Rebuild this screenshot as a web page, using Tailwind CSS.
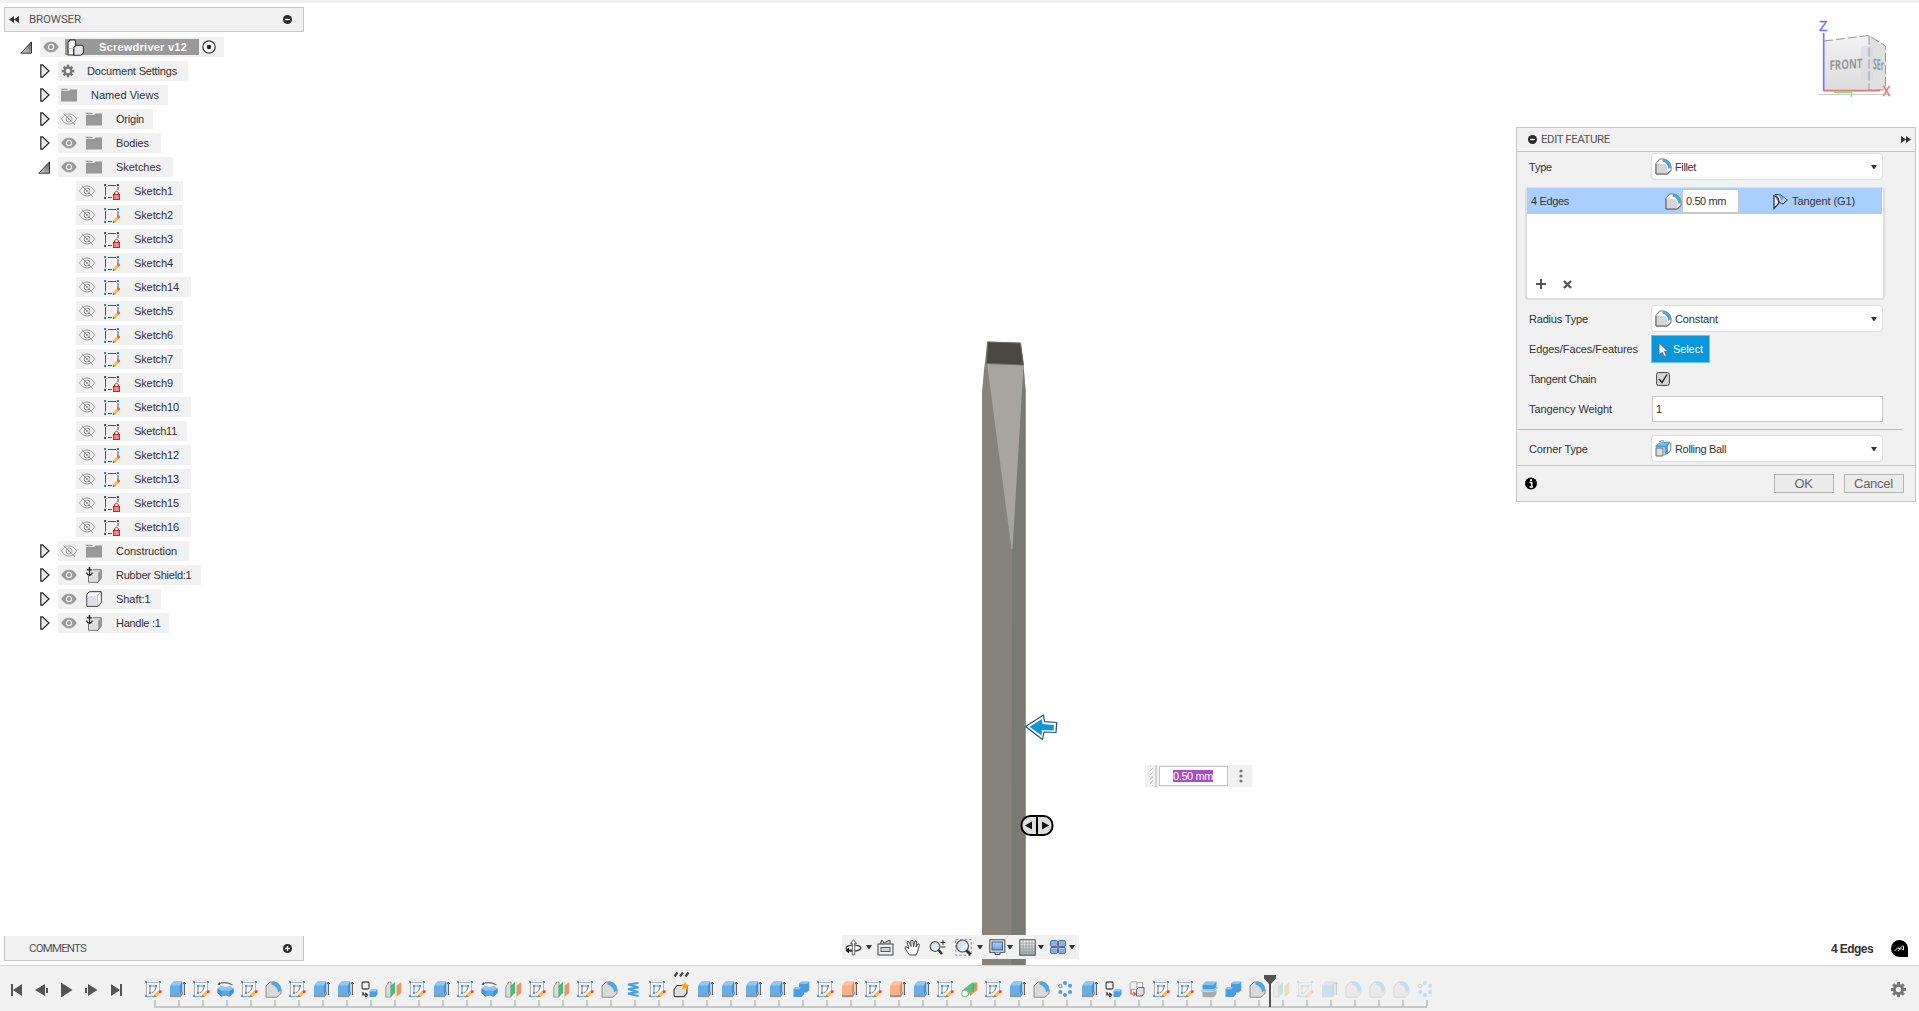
<!DOCTYPE html>
<html lang="en">
<head>
<meta charset="utf-8">
<title>Screwdriver v12</title>
<script src="https://cdn.jsdelivr.net/npm/@tailwindcss/browser@4"></script>
</head>
<body class="w-[1919px] h-[1011px] overflow-hidden bg-white font-['Liberation_Sans',Arial,sans-serif] text-[11px] leading-[14px] text-[#333]">

<svg class="absolute" width="0" height="0">
  <defs>
    <linearGradient id="gTri" x1="0" y1="1" x2="1" y2="0"><stop offset="0" stop-color="#ddd"/><stop offset="1" stop-color="#555"/></linearGradient>
    <linearGradient id="gBlue" x1="0" y1="0" x2="0" y2="1"><stop offset="0" stop-color="#b5d2f2"/><stop offset="1" stop-color="#6ba0de"/></linearGradient>
    <linearGradient id="gLens" x1="0" y1="0" x2="1" y2="1"><stop offset="0" stop-color="#b9dbe0"/><stop offset="1" stop-color="#fff"/></linearGradient>
    <linearGradient id="gGrid" x1="0" y1="0" x2="0" y2="1"><stop offset="0" stop-color="#fff"/><stop offset="1" stop-color="#9aa"/></linearGradient>
    <linearGradient id="gCube" x1="0" y1="0" x2="0" y2="1"><stop offset="0" stop-color="#f3f3f4"/><stop offset="1" stop-color="#dcdcde"/></linearGradient>
  </defs>
  <symbol id="open" viewBox="0 0 12 13"><path d="M11.5 .8V12.2H.8Z" fill="url(#gTri)" stroke="#333"/></symbol>
  <symbol id="closed" viewBox="0 0 10 14"><path d="M.8 .8H2.5L9 7L2.5 13.2H.8Z" fill="#e9eaec" stroke="#222" stroke-width="1.2"/></symbol>
  <symbol id="eye" viewBox="0 0 16 12"><path d="M.3 6C3 1.600 5.500.8 8 .8S13 1.600 15.700 6C13 10.400 10.500 11.200 8 11.200S3 10.400.3 6Z" fill="#999"/><circle cx="8" cy="6" r="2.600" fill="#999" stroke="#f1f1f1" stroke-width="1.200"/></symbol>
  <symbol id="eyeoff" viewBox="0 0 16 12"><path d="M.5 6C3 2 5.500 1 8 1s5 1 7.500 5C13 10 10.500 11 8 11S3 10 .5 6Z" fill="none" stroke="#9a9a9a"/><circle cx="8" cy="6" r="3" fill="none" stroke="#9a9a9a"/><circle cx="8" cy="6" r="1" fill="#9a9a9a"/><path d="M2.500.3L14 11.700" stroke="#8a8a8a" stroke-width="1"/><path d="M3.500.1L15 11.500" stroke="#f1f1f1" stroke-width=".7"/></symbol>
  <symbol id="folder" viewBox="0 0 16 14"><path d="M0 .8H6L7.500 2.300H0ZM0 3H8L9.500 1.500H16V13.500H0Z" fill="#999"/></symbol>
  <symbol id="gear" viewBox="0 0 16 16"><g fill="#777"><circle cx="8" cy="8" r="5.200"/><rect x="6.600" y=".8" width="2.800" height="14.400"/><rect x=".8" y="6.600" width="14.400" height="2.800"/><g transform="rotate(45 8 8)"><rect x="6.600" y="1" width="2.800" height="14"/><rect x="1" y="6.600" width="14" height="2.800"/></g></g><circle cx="8" cy="8" r="2.500" fill="#f1f1f1"/></symbol>
  <symbol id="sk" viewBox="0 0 16 17"><path d="M4 2.500H12M1.500 4V12.500M14 4V9M4 14.500H8" stroke="#555" fill="none"/><path d="M0 1h2v2H0zM13 1h2v2h-2zM0 14h2v2H0z" fill="#1e88e5"/><path d="M9.500 13.200L13.200 9.500L15.200 11.500L11.300 15.200Z" fill="#fbbc45"/><path d="M9.500 13.200L11.300 15.200L8.500 16.200Z" fill="#777"/><circle cx="14.500" cy="10" r="1.400" fill="#f4455a"/></symbol>
  <symbol id="lock" viewBox="0 0 16 17"><path d="M4 2.500H12M1.500 4V12.500M14 4V7M4 14.500H8" stroke="#555" fill="none"/><path d="M0 1h2v2H0zM13 1h2v2h-2zM0 14h2v2H0z" fill="#555"/><path d="M10.500 11V9.500Q12.500 7 14.500 9.500V11" fill="none" stroke="#c33"/><rect x="9.500" y="11.500" width="6" height="5" fill="#e58a8a" stroke="#c62828"/></symbol>
  <symbol id="asm" viewBox="0 0 16 16"><path d="M1 3L3 .8H7L8 2V8L6.500 9V15H1Z" fill="#f5f5f7" stroke="#333"/><path d="M6.500 8L8.500 5.800H14L15.400 7V13L13 15.300H6.500Z" fill="#e6e7ec" stroke="#333"/><path d="M1 9H6.500" stroke="#aaa" stroke-width=".7"/></symbol>
  <symbol id="box" viewBox="0 0 16 16"><path d="M.8 4.500Q.8 3 2 2L3 1Q3.500.7 5 .7H15.300V11Q15.300 12 14 13.200L12.500 15Q12 15.300 11 15.300H.8Z" fill="#fff" stroke="#333"/><path d="M2 5H10.500V14H2Z" fill="#dcdfe4"/><path d="M11.500 4.500L15 1.200V11.500L11.500 14.800Z" fill="#fff" stroke="#777" stroke-width=".5"/></symbol>
  <symbol id="anch" viewBox="0 0 16 16"><path d="M7 2.700H15.300V11L12 15.300H2.500V9" fill="#dedede" stroke="#777"/><path d="M12 5.500L15.300 3V11L12 15Z" fill="#999"/><path d="M3.500 1V8M1 2.800H6.200M.7 5.500Q1 8 3.500 8.300Q6 8 6.300 5.500" fill="none" stroke="#222" stroke-width="1.200"/><circle cx="3.500" cy="1" r="1" fill="#222"/></symbol>

  <symbol id="t-sk" viewBox="0 0 17 17"><path d="M1.500 1.500H14.500V9M1.500 1.500V15.500H9" fill="none" stroke="#b5b5b5"/><path d="M2 2H14V9L9 15H2Z" fill="#f4f4f4"/><path d="M2 15.500H9" stroke="#aaa" stroke-width="1.500"/><path d="M5 5H11M5 5V12M11 5Q11 10 6.500 12" fill="none" stroke="#888"/><path d="M0 0h2v2H0zM14 0h2v2h-2zM0 14h2v2H0zM4 4h2v2H4zM10 4h2v2h-2zM4 11h2v2H4z" fill="#3a9bee"/><path d="M9.500 13.500L13.500 9.500L16 12L11.800 15.800Z" fill="#fbbc45"/><path d="M9.500 13.500L11.800 15.800L8 16.600Z" fill="#888"/><circle cx="15.200" cy="10.400" r="1.500" fill="#f43b50"/></symbol>
  <symbol id="t-ex" viewBox="0 0 17 17"><path d="M1 13.500H11L14 10.500V13L11.500 16.300H1Z" fill="#999"/><path d="M1 4.500L4.500.5H13.200V10.500L11 14H1Z" fill="#67aee6"/><path d="M1 4.500L4.500.5H13.200L11 4.500Z" fill="#8bc9f6"/><path d="M11 4.500L13.200.5V10.500L11 14Z" fill="#3d8ccc"/><path d="M15.300 14V2M13.800 3L15.300 1L16.800 3" fill="none" stroke="#444"/></symbol>
  <symbol id="t-or" viewBox="0 0 17 17"><path d="M1 13.500H11L14 10.500V13L11.500 16.300H1Z" fill="#999"/><path d="M1 4.500L4.500.5H13.200V10.500L11 14H1Z" fill="#fbb083"/><path d="M1 4.500L4.500.5H13.200L11 4.500Z" fill="#fdc49f"/><path d="M11 4.500L13.200.5V10.500L11 14Z" fill="#e28a5a"/><path d="M15.300 14V2M13.800 3L15.300 1L16.800 3" fill="none" stroke="#444"/></symbol>
  <symbol id="t-rv" viewBox="0 0 17 17"><path d="M1.500 3Q8.500 0 15.500 4" fill="none" stroke="#666" stroke-width="1.200"/><path d="M.3 3.500L3 1V4.300Z" fill="#555"/><path d="M.5 7.500L4 5Q8.500 7 13 5L16.500 7.500V12L12.500 15.800Q8.500 13.500 4.500 15.800L.5 12Z" fill="#58a6e0"/><path d="M.5 7.500L4 5Q8.500 7 13 5L16.500 7.500L12.500 10Q8.500 8.500 4.500 10Z" fill="#8bc7f3"/><path d="M.5 7.500L4.500 10V15.800L.5 12ZM16.500 7.500L12.500 10V15.800L16.500 12Z" fill="#4492d0"/></symbol>
  <symbol id="t-fi" viewBox="0 0 17 17"><path d="M1 5L5 1H9Q15 3 16 9V12.500L12 16.200H1Z" fill="#d9d9d9" stroke="#8a8a8a"/><path d="M6.500 .6H10Q15.500 2 16.500 9L13 11.500Q12.500 5.500 6.500 3.500Z" fill="#58a6e0"/></symbol>
  <symbol id="t-cp" viewBox="0 0 17 17"><rect x="1" y="1" width="7" height="7" rx="1.500" fill="#eee" stroke="#555" stroke-width="1.300"/><path d="M2 11V14H5M4.300 12L6.500 14L4.300 16" fill="none" stroke="#222" stroke-width="1.200"/><path d="M8.500 10.500L10.500 8.500H16.500V13.500L14.500 16H8.500Z" fill="#4d9fde"/><path d="M8.500 10.500L10.500 8.500H16.500L14.500 10.500Z" fill="#93cbf5"/></symbol>
  <symbol id="t-pl" viewBox="0 0 17 17"><path d="M.8 6L3.800 1H6V16H.8Z" fill="#ddd" stroke="#999"/><path d="M5.500 5L10 1V12L5.500 16Z" fill="#4dbd75"/><path d="M11.500 4.500L16.300 1V12L11.500 16Z" fill="#e59a6b"/></symbol>
  <symbol id="t-co" viewBox="0 0 17 17"><path d="M13.500 2L3 3.500L13.500 6.500L3 8L13.500 11L3 12.500L13.500 15" fill="none" stroke="#4a9fe0" stroke-width="2"/></symbol>
  <symbol id="t-nb" viewBox="0 0 17 17"><path d="M1 8.500L4 4.500H14V12L11 15.700H2.500Q1 15.700 1 14Z" fill="#ddd" stroke="#444" stroke-width="1.200"/><path d="M12 .3L13 3.500L16.500 4L14 6L14.500 9L12 7L9 8.500L10 5.500L7.800 3.700L11 3.300Z" fill="#ffa000"/></symbol>
  <symbol id="t-cb" viewBox="0 0 17 17"><path d="M6 2.500L8 .8H16.300V9L14 11.500H11V13.500L8.500 16H.5V8L2.500 6H6Z" fill="#4a9ddd"/><path d="M6 2.500L8 .8H16.300L14 3H6ZM.5 8L2.500 6H8L6 8.500H.5Z" fill="#83c2f1"/></symbol>
  <symbol id="t-sg" viewBox="0 0 17 17"><path d="M8 6L12 1.500H16.500V9L9 15V10Z" fill="#e39a68"/><path d="M1 9.500L11 1.500L15 3L15 6L6.500 15Z" fill="#5cc17e"/><path d="M12.500 3.500L12 11" stroke="#a8783f"/><circle cx="4" cy="12.500" r="3.400" fill="#fff" stroke="#66bd83"/></symbol>
  <symbol id="t-pt" viewBox="0 0 17 17"><g fill="#4a9fe0"><circle cx="8" cy="2" r="2"/><circle cx="13" cy="4.800" r="2"/><circle cx="13" cy="11" r="2"/><circle cx="8" cy="14" r="2"/><circle cx="3.300" cy="11" r="2"/></g><circle cx="3.300" cy="5" r="1.700" fill="#eee" stroke="#888"/></symbol>
  <symbol id="t-cc" viewBox="0 0 17 17"><path d="M1 2.500L3 .8H8V7L6.500 8.500H1ZM7 3L8.500 1.500H13.500V6" fill="#eee" stroke="#aaa"/><path d="M2 9V13H6M4.500 11L6.500 13L4.500 15" fill="none" stroke="#d9534f" stroke-width="1.200"/><path d="M7.500 8.500L9.500 6.500H15V12.500L13 15H7.500Z" fill="#dcdce2" stroke="#666"/></symbol>
  <symbol id="t-sp" viewBox="0 0 17 17"><path d="M1.500 11H12L15.500 9V13L12.500 16.300H1.500Z" fill="#aaa"/><path d="M1.500 4L4.500.8H15.500V6L12.500 8.500H1.500Z" fill="#4a9ddd"/><path d="M1.500 4L4.500.8H15.500L12.500 4Z" fill="#83c2f1"/><path d="M0 9.800H12.500L16.500 6.500" fill="none" stroke="#7fbdf0" stroke-width="1.300"/></symbol>
  <symbol id="t-rb" viewBox="0 0 17 17"><path d="M1 8H8V16H1Z" fill="#ddd" stroke="#666"/><path d="M4 2Q7 0 9 1M15.800 3V9Q15.500 12 12 14" fill="none" stroke="#777"/><path d="M.5 5.500L5 2.500L14 1.500L15.500 3L13 5V13L9.500 16V7.500H.5Z" fill="#4f9fda"/><path d="M1.500 5L5 3H13L10 5.800Z" fill="#79bcec"/></symbol>
  <symbol id="fil" viewBox="0 0 17 17"><path d="M1 5.500L4.500 1H9Q15 2 16 9V12L12.500 16H1Z" fill="#fff" stroke="#777"/><path d="M1.500 5.500H7Q12 6 12.500 11.500V15.500H1.500Z" fill="#d6d6d6"/><path d="M8 .7Q15.500 1.500 16.500 9L13.500 11Q13 5 7.500 3.500Z" fill="#58a3da"/><path d="M1 5.500V16H12.500L16 12.500" fill="none" stroke="#666"/></symbol>
  <symbol id="caret" viewBox="0 0 6 4"><path d="M0 0H6L3.500 4H2.500Z" fill="#333"/></symbol>
</svg>

<div class="flex flex-col h-full">
  <main class="relative h-[965px] flex flex-col border-t-[3px] border-[#f0f0f0]">
    <!-- model -->
    <svg class="absolute left-[980px] top-[335px]" width="60" height="627" viewBox="980 338 60 627">
      <path d="M987.500 341.500L984 370L982 392V965H1026V395L1023.500 365L1020.500 343Z" fill="#86837a"/>
      <path d="M1012 549L1023.500 365L1025.500 392L1026 965H1011.500Z" fill="#797a71"/>
      <path d="M1025.500 392V965" stroke="#94978f"/>
      <path d="M987 363L1023.500 365L1012.500 549H1011.500Z" fill="#a8a59e"/>
      <path d="M987.500 342L1020.500 343L1023.500 365L986.500 363.500Z" fill="#4a4840" stroke="#706d65"/>
    </svg>
    <!-- manipulators -->
    <svg class="absolute left-[1018px] top-[707px]" width="42" height="130" viewBox="1018 710 42 130">
      <path d="M1025.500 726.500L1043.500 715L1044.500 721.700L1056.700 722.500L1056 732.500L1044 732L1042.500 739.500Z" fill="#fff" stroke="#24507e" stroke-width="1.200" stroke-linejoin="round"/>
      <path d="M1029.500 726.700L1042 719L1042.500 724L1054 725L1053.500 730.500L1042 730L1041.500 735.500Z" fill="#0b97d8"/>
      <rect x="1021.500" y="816" width="31" height="19" rx="9" fill="#dedede" stroke="#000" stroke-width="2"/>
      <path d="M1037 816V835" stroke="#000" stroke-width="2"/><path d="M1025 825.500L1032 821.500V829.500ZM1049 825.500L1042 821.500V829.500Z" fill="#111"/>
    </svg>
    <div class="absolute left-[1145px] top-[762px] w-[107px] h-[22px] bg-[#f1f1f1] flex items-center">
      <div class="ml-[5px] w-[3px] h-5 bg-[repeating-linear-gradient(135deg,#ccc_0_1px,#f4f4f4_1px_3px)]"></div>
      <div class="ml-0.5 w-0.5 h-[22px] bg-[#d5d5d5]"></div>
      <div class="ml-0.5 w-[69px] h-5 border border-[#c4c4c4] bg-white flex items-center justify-center pr-px"><span data-w="40" class="bg-[#a94cc0] text-white text-[11px] leading-[12px]">0.50 mm</span></div>
      <svg class="ml-[11px]" width="4" height="14"><g fill="#777"><circle cx="2" cy="2" r="1.600"/><circle cx="2" cy="7" r="1.600"/><circle cx="2" cy="12" r="1.600"/></g></svg>
    </div>

    <div class="flex justify-between h-[933px]">
      <section class="ml-1 pt-1">
        <header class="w-[300px] h-[25px] border border-[#c8c8c8] bg-[#f1f1f1] flex items-center pl-1 pr-[11px]">
          <svg width="10" height="7"><path d="M5 0V7L0 3.500ZM10 0V7L5 3.500Z" fill="#333"/></svg>
          <span data-w="52" class="ml-2.5 mb-px font-[Roboto] text-[11.5px] text-[#555]">BROWSER</span>
          <svg class="ml-auto" width="9" height="9"><circle cx="4.500" cy="4.500" r="4.500" fill="#2b2b2b"/><path d="M2 4.500H7" stroke="#fff" stroke-width="1.300"/></svg>
        </header>
        <div id="tree" class="pt-[3px]"></div>
      </section>

      <section class="mr-[3px] flex flex-col">
        <svg class="ml-[290px]" width="100" height="124" viewBox="1806 3 100 124">
          <path d="M1818 94.500H1890" stroke="#ccc" />
          <path d="M1824 41L1869 35.500V90H1824Z" fill="url(#gCube)"/><path d="M1869 35.500L1885.500 46V90H1869Z" fill="#e0e0e3"/>
          <path d="M1861 46H1873V80H1861Z" fill="#d6d9e0" opacity=".6"/>
          <path d="M1824 41L1869 35.500L1885.500 46V90M1869 35.500V90H1886" fill="none" stroke="#999" stroke-dasharray="9 3"/>
          <text x="0" y="0" transform="matrix(1 -.06 0 1.250 1829.500 70)" font-family="Open Sans" font-weight="700" font-size="10.500" textLength="33" lengthAdjust="spacingAndGlyphs" fill="#94979c">FRONT</text>
          <text x="0" y="0" transform="matrix(1 .15 0 1.500 1873 69)" font-family="Open Sans" font-weight="700" font-size="10" textLength="11" lengthAdjust="spacingAndGlyphs" fill="#94979c">SEr</text>
          <path d="M1823.700 33V91" stroke="#7878ee" stroke-width="1.700"/><path d="M1823 90.700H1880" stroke="#ee7070" stroke-width="1.700"/><path d="M1834 92.300H1852M1851.500 92V97" stroke="#7be07b" stroke-width="1.500"/>
          <text x="1819" y="31" font-family="Liberation Sans" font-size="14" fill="#7474ee" stroke="#7474ee" stroke-width=".4" textLength="8.500" lengthAdjust="spacingAndGlyphs">Z</text>
          <text x="1882.500" y="95.500" font-family="Liberation Sans" font-size="14" fill="#f06a6a" stroke="#f06a6a" stroke-width=".4" textLength="8" lengthAdjust="spacingAndGlyphs">X</text>
        </svg>

        <div class="w-[400px] h-[375px] border border-[#c6c6c6] bg-[#f1f1f1]">
          <header class="h-6 border-b border-[#c6c6c6] flex items-center pl-[11px] pr-1">
            <svg width="9" height="9"><circle cx="4.500" cy="4.500" r="4.500" fill="#2b2b2b"/><path d="M2 4.500H7" stroke="#fff" stroke-width="1.300"/></svg>
            <span data-w="69" class="ml-1 mb-px font-[Roboto] text-[11.5px] text-[#555]">EDIT FEATURE</span>
            <svg class="ml-auto" width="10" height="7"><path d="M0 0V7L5 3.500ZM5 0V7L10 3.500Z" fill="#333"/></svg>
          </header>
          <div class="h-[29px] flex items-center pl-3"><span class="w-[122px]"><span data-w="23">Type</span></span>
            <div class="w-[232px] h-[27px] border border-[#dcdcdc] rounded-sm bg-white flex items-center px-[3px] pr-[5px]"><svg width="17" height="17"><use href="#fil"/></svg><span data-w="21" class="ml-[3px]">Fillet</span><svg class="ml-auto" width="6" height="4"><use href="#caret"/></svg></div></div>
          <div class="mt-1.5 ml-2 w-[360px] h-[113px] border-2 border-[#dedede] rounded-sm bg-white flex flex-col">
            <div class="-mt-px h-[26px] mr-px bg-[#a9cfff] flex items-center pl-1"><span class="w-[134px]"><span data-w="38">4 Edges</span></span>
              <svg width="17" height="17"><use href="#fil"/></svg>
              <div class="w-[57px] h-6 border border-[#c8c8c8] bg-white flex items-center pl-[3px]"><span data-w="40">0.50 mm</span></div>
              <svg class="ml-[33px]" width="17" height="17" viewBox="0 0 17 17"><path d="M2 3V15.500L7 10" fill="#f0f4f8" stroke="#26303c" stroke-width="1.200"/><path d="M1 2.500Q5 2.500 7 10" fill="none" stroke="#26303c"/><path d="M3 1.500H8L12 4.500L15.500 7L11 11L7.500 9.500Q7 4.500 3 1.500Z" fill="#c8dcf2" stroke="#26303c"/><path d="M6 1.500H8L12 4.500L10 9Q9 5 6 1.500Z" fill="#6ba6dc"/></svg>
              <span data-w="63" class="ml-[3px]">Tangent (G1)</span></div>
            <div class="mt-auto mb-[9px] ml-[9px] flex items-center gap-[17px]"><svg width="10" height="10"><path d="M5 0V10M0 5H10" stroke="#555" stroke-width="2"/></svg><svg width="9" height="9"><path d="M1 1L8 8M8 1L1 8" stroke="#555" stroke-width="2.400"/></svg></div>
          </div>
          <div class="mt-1 h-[29px] flex items-center pl-3"><span class="w-[122px]"><span data-w="59">Radius Type</span></span>
            <div class="w-[232px] h-[27px] border border-[#dcdcdc] rounded-sm bg-white flex items-center px-[3px] pr-[5px]"><svg width="17" height="17"><use href="#fil"/></svg><span data-w="43" class="ml-[3px]">Constant</span><svg class="ml-auto" width="6" height="4"><use href="#caret"/></svg></div></div>
          <div class="mt-px h-[30px] flex items-center pl-3"><span class="w-[122px]"><span data-w="109">Edges/Faces/Features</span></span>
            <div class="w-[59px] h-[28px] border border-[#6cc4ee] bg-[#0a96da] flex items-center pl-[6px] text-white"><svg width="11" height="15"><path d="M1 .8L10 9.500H6.500L8.500 13.500L6.200 14.500L4.300 10.300L1 13Z" fill="#f2f2f2" stroke="#666" stroke-width=".8"/></svg><span data-w="30" class="ml-1">Select</span></div></div>
          <div class="h-[30px] flex items-center pl-3"><span class="w-[127px]"><span data-w="67">Tangent Chain</span></span>
            <svg width="14" height="14"><rect x=".6" y=".6" width="12.800" height="12.800" rx="2" fill="#d5d5d5" stroke="#444"/><path d="M3 7L6 10.500L11 2.500" fill="none" stroke="#222" stroke-width="1.400"/></svg></div>
          <div class="h-[30px] flex items-center pl-3"><span class="w-[123px]"><span data-w="83">Tangency Weight</span></span>
            <div class="w-[231px] h-[26px] border border-[#c8c8c8] bg-white flex items-center pl-[3px]">1</div></div>
          <div class="mt-[5px] ml-px mr-[13px] h-px bg-[#bdbdbd]"></div>
          <div class="mt-1 mb-0.5 h-[29px] flex items-center pl-3"><span class="w-[122px]"><span data-w="59">Corner Type</span></span>
            <div class="w-[232px] h-[27px] border border-[#dcdcdc] rounded-sm bg-white flex items-center px-[3px] pr-[5px]"><svg width="17" height="17"><use href="#t-rb"/></svg><span data-w="51" class="ml-[3px]">Rolling Ball</span><svg class="ml-auto" width="6" height="4"><use href="#caret"/></svg></div></div>
          <div class="border-t border-[#c6c6c6] h-[36px] flex items-center pl-2 pr-[11px]">
            <svg width="13" height="13"><circle cx="6" cy="6.500" r="6" fill="#000"/><path d="M4.500 5.500H6.800V10M4.500 10H8" stroke="#fff" stroke-width="1.400" fill="none"/><rect x="5" y="2.300" width="2" height="1.800" fill="#fff"/></svg>
            <div class="ml-auto w-[60px] h-[19px] border border-[#b5b5b5] bg-[#ececec] flex items-center justify-center pr-px text-[13px] text-[#666]"><span data-w="18">OK</span></div>
            <div class="ml-2.5 w-[60px] h-[19px] border border-[#b5b5b5] bg-[#ececec] flex items-center justify-center pr-px text-[13px] text-[#666]"><span data-w="39">Cancel</span></div>
          </div>
        </div>
      </section>
    </div>

    <!-- bottom bar of the viewport -->
    <div class="relative -mt-1 flex items-start">
      <div class="ml-1 mt-1 w-[300px] h-[25px] border border-t-0 border-[#c4c4c4] bg-[#f1f1f1] flex items-center pl-6 pr-[11px]">
        <span data-w="57" class="font-[Roboto] text-[11.5px] text-[#555]">COMMENTS</span>
        <svg class="ml-auto" width="9" height="9"><circle cx="4.500" cy="4.500" r="4.500" fill="#2b2b2b"/><path d="M2 4.500H7M4.500 2V7" stroke="#fff" stroke-width="1.300"/></svg>
      </div>
      <div class="ml-[538px] mt-[3px] w-[237px] h-6 bg-[#f1f1f1] flex items-center">
        <svg class="ml-[3px]" width="17" height="17"><ellipse cx="8.500" cy="9" rx="7.500" ry="3" fill="none" stroke="#333" stroke-width="1.200"/><path d="M7.300 16V4.500H5.500L8.500.7L11.500 4.500H9.700V16Z" fill="#fff" stroke="#444" stroke-width=".8"/><path d="M1.500 11.500H7" stroke="#111" stroke-width="1.600"/><path d="M.5 11.500L4 8.800V14.200Z" fill="#111"/></svg>
        <svg class="ml-1" width="6" height="4"><use href="#caret"/></svg>
        <svg class="ml-[5px]" width="17" height="17"><path d="M3 5L5 1L7 4L13 1V5" fill="#ccc" stroke="#444"/><rect x="1" y="5" width="15" height="11" fill="#eee" stroke="#444"/><rect x="4" y="8.500" width="9" height="4" fill="#cfd4dc" stroke="#555"/></svg>
        <svg class="ml-[10px]" width="17" height="17"><path d="M5 15.500L1 9Q1 7 3 8L5 9.800L3 3Q4 1.500 5 3L7 7.500L6.800 1.800Q8 .3 9 1.800L9.500 7.500L11 2Q12.500 1.500 12.700 3L12 8L14 4.800Q15.800 4.700 15.300 6.500L13.500 13L12 16H5.500Z" fill="#fff" stroke="#444"/></svg>
        <svg class="ml-2" width="17" height="17"><circle cx="6" cy="7.500" r="4.800" fill="url(#gLens)" stroke="#555" stroke-width="1.200"/><path d="M9.500 11L13 15" stroke="#333" stroke-width="2.500"/><path d="M11.500 3.500H16.500M14 1V6M11.500 8H16.500" stroke="#333"/></svg>
        <svg class="ml-[9px]" width="17" height="17"><rect x=".7" y=".7" width="15.500" height="15.500" fill="none" stroke="#888" stroke-dasharray="2.500 2"/><circle cx="7.500" cy="7" r="6" fill="url(#gLens)" stroke="#555" stroke-width="1.200"/><path d="M11.500 11.500L15.500 15.500" stroke="#333" stroke-width="3"/></svg>
        <svg class="ml-[5px]" width="6" height="4"><use href="#caret"/></svg>
        <svg class="ml-1.5" width="17" height="17"><rect x=".8" y=".8" width="15" height="12.500" fill="#eee" stroke="#444"/><rect x="3" y="3" width="10.500" height="8" fill="url(#gBlue)" stroke="#2e5c94"/><path d="M6 13.500V15.500H11V13.500" fill="#ddd" stroke="#444"/></svg>
        <svg class="ml-px" width="6" height="4"><use href="#caret"/></svg>
        <svg class="ml-1.5" width="17" height="17"><rect x=".8" y=".8" width="15.400" height="15.400" fill="url(#gGrid)" stroke="#444"/><path d="M4 1V16M7 1V16M10 1V16M13 1V16M1 4H16M1 7H16M1 10H16M1 13H16" stroke="#999" stroke-width=".8"/></svg>
        <svg class="ml-0.5" width="6" height="4"><use href="#caret"/></svg>
        <svg class="ml-1.5" width="16" height="14"><g fill="#a9c8ee" stroke="#38557f"><rect x=".7" y=".7" width="7" height="6" rx="1"/><rect x="8.300" y=".7" width="7" height="6" rx="1"/><rect x=".7" y="7.300" width="7" height="6" rx="1"/><rect x="8.300" y="7.300" width="7" height="6" rx="1"/></g><path d="M2.500 3H6V5H2.500ZM10 3H13.500V5H10ZM2.500 9.500H6V11.500H2.500ZM10 9.500H13.500V11.500H10Z" fill="none" stroke="#6e95c8" stroke-width=".8"/></svg>
        <svg class="ml-[3px]" width="6" height="4"><use href="#caret"/></svg>
      </div>
      <span data-w="42" class="ml-[752px] mt-[10px] font-bold text-[12px]">4 Edges</span>
      <svg class="ml-[18px] mt-2" width="17" height="17"><path d="M8.500 0A8.300 8.300 0 0 1 17 8.500V17H8.500A8.500 8.500 0 0 1 8.500 0Z" fill="#000"/><path d="M3.500 11L7 7.500L8 9L12 5.500M7 11L10 8.500L12.500 10V6" stroke="#ddd" fill="none"/></svg>
    </div>
  </main>

  <footer class="h-[46px] bg-[#f1f1f1] border-t border-[#d4d4d4] flex">
    <div class="w-[144px] flex items-start pt-[15px]">
      <svg width="130" height="18" viewBox="0 981 130 18" fill="#555"><path d="M11 984H13V996H11ZM22 984V996L13 990ZM35 990L45 984V996ZM46 988H48V993H46ZM61 982.500V997.500L72.500 990ZM85 988H87V993H85ZM88 984V996L97.500 990ZM111 984V996L120 990ZM120 984H122V996H120Z"/></svg>
    </div>
    <div class="relative">
      <div id="timeline" class="flex pt-[15px] ml-px"></div>
      <div id="ticks" class="ml-[10px] mt-px h-[8px] w-[1273px] border-b-2 border-[#c8c8c8] flex"></div>
      <svg class="absolute left-[529px] top-[6px]" width="17" height="5"><path d="M1.500 4.500L4.500.5M7 4.500L10 .5M12.500 4.500L15.500.5" stroke="#444" stroke-width="2.200"/></svg>
      <svg class="absolute left-[1120px] top-[9px]" width="12" height="33"><path d="M0 0H12V3.500L7 9H5L0 3.500Z" fill="#555"/><rect x="5" y="8" width="2" height="24" fill="#555"/></svg>
    </div>
    <svg class="ml-auto mr-3 mt-[15px]" width="17" height="17"><use href="#gear"/></svg>
  </footer>
</div>

<script>
const icon = (id, w, h) => `<svg width="${w}" height="${h}"><use href="#${id}"/></svg>`;
const EYE = {on: icon('eye',16,12), off: icon('eyeoff',16,12)};
// [expander, visibility, icon, label, label width, chip width]
const rows = [
  ['closed','', 'gear','Document Settings',90,130], ['closed','','folder','Named Views',68,110],
  ['closed','off','folder','Origin',28,95], ['closed','on','folder','Bodies',33,103], ['open','on','folder','Sketches',45,115],
  ...[['1','lock'],['2','sk'],['3','lock'],['4','sk'],['14','sk'],['5','sk'],['6','sk'],['7','sk'],['9','lock'],['10','sk'],['11','lock'],['12','sk'],['13','sk'],['15','lock'],['16','lock']]
    .map(([n,k]) => ['', 'off', k, 'Sketch'+n, n==='11'?43:n.length>1?45:39, n==='11'?111:n.length>1?115:107]),
  ['closed','off','folder','Construction',61,131], ['closed','on','anch','Rubber Shield:1',75.5,143], ['closed','on','box','Shaft:1',34.5,103], ['closed','on','anch','Handle :1',44.5,111]
];
let html = `<div class="h-6 flex items-center pl-4">${icon('open',12,13)}
  <div class="ml-2 w-[184px] h-5 bg-[#f1f1f1] flex items-center pl-[3px]">${EYE.on}
    <div class="ml-1.5 w-[134px] h-4 bg-[#999] flex items-center pl-0.5 text-white font-bold">${icon('asm',17,17)}<span data-w="88" data-bold class="ml-[15px]">Screwdriver v12</span></div>
    <svg class="ml-[3px]" width="14" height="14"><circle cx="7" cy="7" r="6.200" fill="#fff" stroke="#333" stroke-width="1.200"/><circle cx="7" cy="7" r="2.200" fill="#222"/></svg></div></div>`;
for (const [ex, vis, ic, label, w, cw] of rows) {
  const deep = ex === '';
  const size = {gear:[14,14], folder:[16,14], sk:[16,17], lock:[16,17]}[ic] || [16,16];
  html += `<div class="h-6 flex items-center"><span class="${deep ? 'w-[72px]' : 'w-[54px]'} flex ${ex === 'open' ? 'pl-[34px]' : 'pl-9'}">${deep ? '' : ex === 'open' ? icon('open',12,13) : icon('closed',10,14)}</span>
    <div class="h-5 bg-[#f1f1f1] flex items-center pl-[3px]" style="width:${cw}px">${vis ? EYE[vis] + '<span class="w-[9px]"></span>' : ''}${icon(ic, ...size)}<span data-w="${w}" class="${ic === 'gear' ? 'ml-3' : 'ml-3.5'}">${label}</span></div></div>`;
}
document.getElementById('tree').innerHTML = html;

const steps = 'sk ex sk rv sk fi sk ex ex cp pl sk ex sk rv pl sk pl sk fi co sk nb ex ex ex ex cb sk or sk or ex sk sg sk ex fi pt ex cp cc sk sk sp cb fi pl sk ex fi fi fi pt'.split(' ');
document.getElementById('timeline').innerHTML = steps.map((s, i) => `<div class="w-6 h-[18px] ${i > 46 ? 'opacity-25' : ''}">${icon('t-' + s, 17, 17)}</div>`).join('');
document.getElementById('ticks').innerHTML = steps.map(() => '<div class="w-6 shrink-0 last:w-0.5"><div class="w-0.5 h-1.5 bg-[#c8c8c8]"></div></div>').join('');

// space each label's letters so that it has its hinted width
const ctx = document.createElement('canvas').getContext('2d');
document.querySelectorAll('[data-w]').forEach(el => {
  const roboto = el.classList.contains('font-[Roboto]');
  const bold = el.classList.contains('font-bold') || el.hasAttribute('data-bold');
  const size = roboto ? 11.5 : el.classList.contains('text-[12px]') ? 12 : el.parentElement.classList.contains('text-[13px]') ? 13 : 11;
  ctx.font = `${bold ? 'bold ' : ''}${size}px ${roboto ? 'Roboto' : '"Liberation Sans"'}`;
  el.style.whiteSpace = 'nowrap';
  el.style.letterSpacing = ((el.dataset.w - ctx.measureText(el.textContent).width) / el.textContent.length).toFixed(3) + 'px';
});
</script>
</body>
</html>
